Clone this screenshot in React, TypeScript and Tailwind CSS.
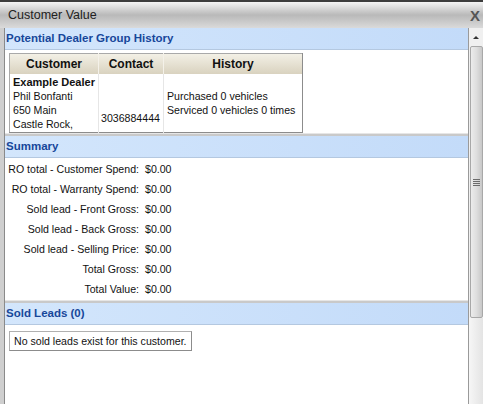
import React from 'react';

const FONT = { fontFamily: '"Liberation Sans", Arial, sans-serif' };

const SUMMARY: [string, string][] = [
  ['RO total - Customer Spend:', '$0.00'],
  ['RO total - Warranty Spend:', '$0.00'],
  ['Sold lead - Front Gross:', '$0.00'],
  ['Sold lead - Back Gross:', '$0.00'],
  ['Sold lead - Selling Price:', '$0.00'],
  ['Total Gross:', '$0.00'],
  ['Total Value:', '$0.00'],
];

function SectionHeader({ title }: { title: string }) {
  return (
    <div className="h-[22px] flex items-center pl-[1px] bg-gradient-to-r from-[#d3e6fc] to-[#c3dbf9] border-b border-[#b4c8e0]">
      <span className="text-[11.5px] font-bold text-[#17479a] whitespace-nowrap">{title}</span>
    </div>
  );
}

function Separator() {
  return <div className="h-[3px] bg-[#c9c9c9] border-t border-[#e6e6e6]" />;
}

export default function App() {
  return (
    <div className="w-[483px] h-[404px] overflow-hidden bg-[#d6d6d6] flex flex-col text-[#111]" style={FONT}>
      {/* title bar */}
      <div className="h-[28px] shrink-0 border-t-2 border-[#3c3c3c] bg-gradient-to-b from-[#f4f4f4] via-[#b9b9b9] to-[#dadada] flex items-center justify-between pl-[8px] pr-[3px]">
        <span className="text-[12.5px] text-[#222]">Customer Value</span>
        <span className="text-[15px] font-bold text-[#555] leading-none">X</span>
      </div>

      <div className="flex flex-1 min-h-0">
        {/* left frame */}
        <div className="w-[5px] bg-[#cfcfcf] border-r border-[#8a8a8a]" />

        {/* content */}
        <div className="flex-1 bg-white flex flex-col">
          <SectionHeader title="Potential Dealer Group History" />

          <div className="pl-[4px] pt-[3px] pb-[2px] h-[83px]">
            <table className="table-fixed w-[293px] border border-[#a9a9a9] border-r-[#8c8c8c] border-b-[#8c8c8c] text-[10.6px] border-collapse whitespace-nowrap">
              <colgroup>
                <col className="w-[89px]" />
                <col className="w-[65px]" />
                <col className="w-[139px]" />
              </colgroup>
              <thead>
                <tr className="h-[20px] bg-gradient-to-b from-[#f3f0e6] to-[#d9d2bf] text-[12px]">
                  <th className="font-bold border-r border-[#f4f1e9]">Customer</th>
                  <th className="font-bold border-r border-[#f4f1e9]">Contact</th>
                  <th className="font-bold">History</th>
                </tr>
              </thead>
              <tbody>
                <tr className="align-top">
                  <td className="px-[3px] pt-[1px] pb-[1px] leading-[14px] border-r border-[#e6e6e6]">
                    <div className="font-bold text-[11px]">Example Dealer</div>
                    <div>Phil Bonfanti</div>
                    <div>650 Main</div>
                    <div>Castle Rock,</div>
                  </td>
                  <td className="px-[2px] leading-[14px] align-bottom pb-[7px] border-r border-[#e6e6e6]">3036884444</td>
                  <td className="px-[3px] leading-[14px] align-middle">
                    <div>Purchased 0 vehicles</div>
                    <div>Serviced 0 vehicles 0 times</div>
                  </td>
                </tr>
              </tbody>
            </table>
          </div>

          <Separator />
          <SectionHeader title="Summary" />

          <div className="pt-[2px] h-[142px] text-[10.6px] whitespace-nowrap">
            {SUMMARY.map(([label, value]) => (
              <div key={label} className="flex h-[20px] items-center">
                <span className="w-[134px] shrink-0 text-right">{label}</span>
                <span className="pl-[6px]">{value}</span>
              </div>
            ))}
          </div>

          <Separator />
          <SectionHeader title="Sold Leads (0)" />

          <div className="pl-[4px] pt-[3px]">
            <div className="inline-block border border-[#b0b0b0] border-r-[#8c8c8c] border-b-[#8c8c8c] px-[4px] py-[3px] leading-[12px] text-[10.6px] whitespace-nowrap">
              No sold leads exist for this customer.
            </div>
          </div>
        </div>

        {/* scrollbar */}
        <div className="w-[15px] bg-[#f0f0f0] border-l border-[#9a9a9a] flex flex-col">
          <div className="h-[18px] flex items-center justify-center">
            <div className="w-0 h-0 border-l-[3px] border-r-[3px] border-b-[3px] border-l-transparent border-r-transparent border-b-[#333]" />
          </div>
          <div className="h-[272px] ml-[1px] bg-gradient-to-r from-[#ececec] via-[#dedede] to-[#c8c8c8] border border-[#a8a8a8] rounded-[2px] flex items-center justify-center">
            <div className="flex flex-col gap-[1px]">
              <div className="w-[7px] h-[1px] bg-[#6c6c6c]" />
              <div className="w-[7px] h-[1px] bg-[#6c6c6c]" />
              <div className="w-[7px] h-[1px] bg-[#6c6c6c]" />
              <div className="w-[7px] h-[1px] bg-[#6c6c6c]" />
            </div>
          </div>
          <div className="flex-1 bg-gradient-to-r from-[#f6f6f6] to-[#e4e4e4]" />
        </div>
      </div>
    </div>
  );
}
